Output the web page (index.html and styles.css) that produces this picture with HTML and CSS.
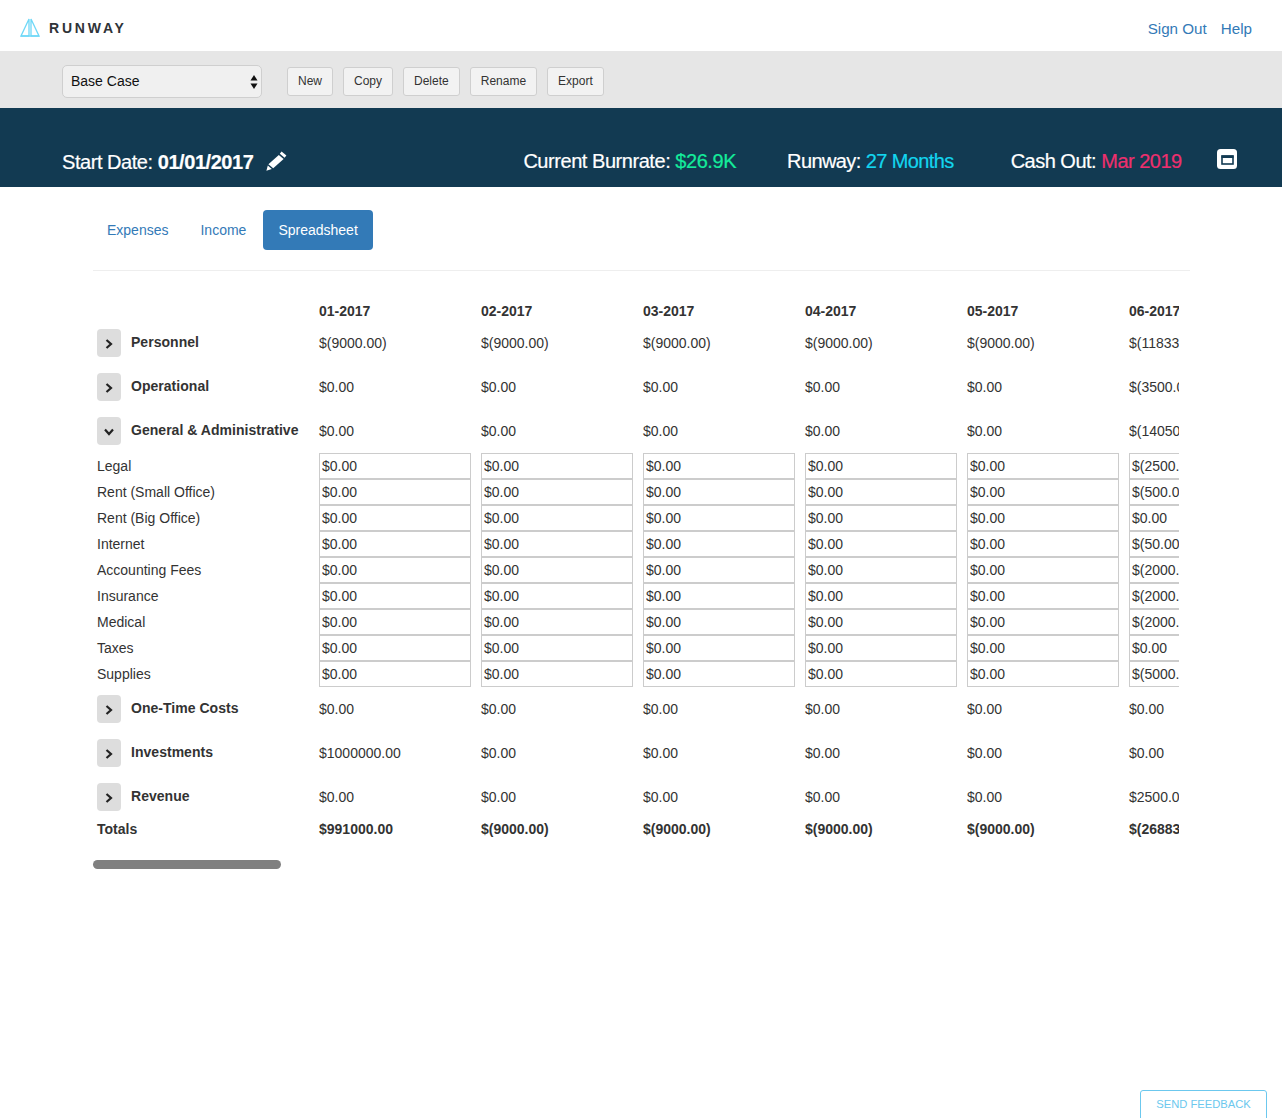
FILE: index.html
```html
<!DOCTYPE html>
<html lang="en">
<head>
<meta charset="utf-8">
<title>Runway</title>
<link rel="stylesheet" href="styles.css">
</head>
<body>
<header class="topbar">
  <div class="brand">
    <svg class="logo" width="20" height="19" viewBox="0 0 20 19" fill="none" stroke="#6fd8f7" stroke-width="1.3"><path d="M9 1 L1 18 H9 Z"/><path d="M11 1 L19 18 H11 Z"/><path d="M1 18 H19"/></svg>
    <span class="brand-name">RUNWAY</span>
  </div>
  <nav class="toplinks"><a href="#">Sign Out</a><a href="#">Help</a></nav>
</header>

<section class="toolbar">
  <div class="select-wrap">
    <select class="scenario"><option>Base Case</option></select>
    <svg class="select-arrows" width="8" height="14" viewBox="0 0 8 14" fill="#111"><path d="M4 0 L7.5 5.5 H0.5 Z"/><path d="M4 14 L7.5 8.5 H0.5 Z"/></svg>
  </div>
  <button class="tool">New</button>
  <button class="tool">Copy</button>
  <button class="tool">Delete</button>
  <button class="tool">Rename</button>
  <button class="tool">Export</button>
</section>

<section class="banner">
  <div class="start">Start Date: <b>01/01/2017</b></div>
  <svg class="pencil" width="21" height="20" viewBox="0 0 21 20" fill="#fff"><path d="M15.6 0.6 L20.4 4.6 L18.6 6.8 L13.8 2.8 Z"/><path d="M12.8 4 L17.6 8 L7.2 17.2 L2.4 13.2 Z"/><path d="M1.8 14.4 L5.8 18 L0.4 19.8 Z"/></svg>
  <div class="stat stat-burn">Current Burnrate: <span class="green">$26.9K</span></div>
  <div class="stat stat-runway">Runway: <span class="cyan">27 Months</span></div>
  <div class="stat stat-cash">Cash Out: <span class="pink">Mar 2019</span></div>
  <svg class="window" width="20" height="20" viewBox="0 0 20 20"><rect x="0" y="0" width="20" height="20" rx="3.5" fill="#fff"/><rect x="5" y="7" width="11" height="8" fill="none" stroke="#123a52" stroke-width="1.6"/><rect x="4.5" y="6.5" width="12" height="2.5" fill="#123a52"/></svg>
</section>

<main class="content">
  <nav class="tabs">
    <a class="tab" href="#">Expenses</a>
    <a class="tab" href="#">Income</a>
    <a class="tab active" href="#">Spreadsheet</a>
  </nav>
  <hr class="rule">

  <div class="sheet">
    <div class="row row-head"><div></div><div>01-2017</div><div>02-2017</div><div>03-2017</div><div>04-2017</div><div>05-2017</div><div>06-2017</div></div>

    <div class="row row-section">
      <div class="label"><button class="toggle"><svg width="8" height="10" viewBox="0 0 8 10" fill="none" stroke="#222" stroke-width="2.2"><path d="M1.5 1 L6 5 L1.5 9"/></svg></button><span class="section-name">Personnel</span></div>
      <div>$(9000.00)</div><div>$(9000.00)</div><div>$(9000.00)</div><div>$(9000.00)</div><div>$(9000.00)</div><div>$(11833.33)</div>
    </div>
    <div class="row row-section">
      <div class="label"><button class="toggle"><svg width="8" height="10" viewBox="0 0 8 10" fill="none" stroke="#222" stroke-width="2.2"><path d="M1.5 1 L6 5 L1.5 9"/></svg></button><span class="section-name">Operational</span></div>
      <div>$0.00</div><div>$0.00</div><div>$0.00</div><div>$0.00</div><div>$0.00</div><div>$(3500.00)</div>
    </div>
    <div class="row row-section row-open">
      <div class="label"><button class="toggle"><svg width="10" height="8" viewBox="0 0 10 8" fill="none" stroke="#222" stroke-width="2.2"><path d="M1 1.5 L5 6 L9 1.5"/></svg></button><span class="section-name">General &amp; Administrative</span></div>
      <div>$0.00</div><div>$0.00</div><div>$0.00</div><div>$0.00</div><div>$0.00</div><div>$(14050.00)</div>
    </div>

    <div class="lines">
      <div class="row row-line"><div>Legal</div><input value="$0.00"><input value="$0.00"><input value="$0.00"><input value="$0.00"><input value="$0.00"><input value="$(2500.00)"></div>
      <div class="row row-line"><div>Rent (Small Office)</div><input value="$0.00"><input value="$0.00"><input value="$0.00"><input value="$0.00"><input value="$0.00"><input value="$(500.00)"></div>
      <div class="row row-line"><div>Rent (Big Office)</div><input value="$0.00"><input value="$0.00"><input value="$0.00"><input value="$0.00"><input value="$0.00"><input value="$0.00"></div>
      <div class="row row-line"><div>Internet</div><input value="$0.00"><input value="$0.00"><input value="$0.00"><input value="$0.00"><input value="$0.00"><input value="$(50.00)"></div>
      <div class="row row-line"><div>Accounting Fees</div><input value="$0.00"><input value="$0.00"><input value="$0.00"><input value="$0.00"><input value="$0.00"><input value="$(2000.00)"></div>
      <div class="row row-line"><div>Insurance</div><input value="$0.00"><input value="$0.00"><input value="$0.00"><input value="$0.00"><input value="$0.00"><input value="$(2000.00)"></div>
      <div class="row row-line"><div>Medical</div><input value="$0.00"><input value="$0.00"><input value="$0.00"><input value="$0.00"><input value="$0.00"><input value="$(2000.00)"></div>
      <div class="row row-line"><div>Taxes</div><input value="$0.00"><input value="$0.00"><input value="$0.00"><input value="$0.00"><input value="$0.00"><input value="$0.00"></div>
      <div class="row row-line"><div>Supplies</div><input value="$0.00"><input value="$0.00"><input value="$0.00"><input value="$0.00"><input value="$0.00"><input value="$(5000.00)"></div>
    </div>

    <div class="row row-section">
      <div class="label"><button class="toggle"><svg width="8" height="10" viewBox="0 0 8 10" fill="none" stroke="#222" stroke-width="2.2"><path d="M1.5 1 L6 5 L1.5 9"/></svg></button><span class="section-name">One-Time Costs</span></div>
      <div>$0.00</div><div>$0.00</div><div>$0.00</div><div>$0.00</div><div>$0.00</div><div>$0.00</div>
    </div>
    <div class="row row-section">
      <div class="label"><button class="toggle"><svg width="8" height="10" viewBox="0 0 8 10" fill="none" stroke="#222" stroke-width="2.2"><path d="M1.5 1 L6 5 L1.5 9"/></svg></button><span class="section-name">Investments</span></div>
      <div>$1000000.00</div><div>$0.00</div><div>$0.00</div><div>$0.00</div><div>$0.00</div><div>$0.00</div>
    </div>
    <div class="row row-section row-last">
      <div class="label"><button class="toggle"><svg width="8" height="10" viewBox="0 0 8 10" fill="none" stroke="#222" stroke-width="2.2"><path d="M1.5 1 L6 5 L1.5 9"/></svg></button><span class="section-name">Revenue</span></div>
      <div>$0.00</div><div>$0.00</div><div>$0.00</div><div>$0.00</div><div>$0.00</div><div>$2500.00</div>
    </div>

    <div class="row row-totals"><div>Totals</div><div>$991000.00</div><div>$(9000.00)</div><div>$(9000.00)</div><div>$(9000.00)</div><div>$(9000.00)</div><div>$(26883.33)</div></div>
  </div>
  <div class="thumb"></div>
</main>

<a class="feedback" href="#">SEND FEEDBACK</a>
</body>
</html>
```

FILE: styles.css
```css
* { box-sizing: border-box; }
html, body { margin: 0; padding: 0; }
body {
  font-family: "Liberation Sans", Arial, sans-serif;
  font-size: 14px;
  color: #333;
  background: #fff;
}
a { text-decoration: none; color: #337ab7; }

.topbar {
  height: 51px;
  display: flex;
  align-items: center;
  justify-content: space-between;
  padding: 5px 30px 0 20px;
  background: #fff;
}
.brand { display: flex; align-items: center; }
.logo { display: block; margin: -2px 9px 0 0; }
.brand-name {
  font-weight: 700;
  font-size: 14px;
  letter-spacing: 2.8px;
  color: #2f3338;
}
.toplinks { display: flex; gap: 14px; font-size: 15.2px; }

.toolbar {
  height: 57px;
  padding: 14px 0 10px 62px;
  display: flex;
  align-items: center;
  gap: 10px;
  background: #e6e6e6;
}
.select-wrap { position: relative; width: 200px; height: 33px; margin-right: 15px; }
.scenario {
  appearance: none;
  -webkit-appearance: none;
  width: 100%;
  height: 100%;
  padding: 0 8px 2px;
  font: 14px "Liberation Sans", Arial, sans-serif;
  color: #111;
  background: #f0f0f0;
  border: 1px solid #cfcfcf;
  border-radius: 5px;
}
.select-arrows { position: absolute; right: 4px; top: 10px; }
.tool {
  height: 29px;
  padding: 0 10px 2px;
  font: 12px "Liberation Sans", Arial, sans-serif;
  color: #333;
  background: #f2f2f2;
  border: 1px solid #cfcfcf;
  border-radius: 3px;
}

.banner {
  height: 79px;
  padding: 39px 0 12px 62px;
  display: flex;
  align-items: center;
  background: #123a52;
  color: #fff;
  font-size: 20px;
  letter-spacing: -0.45px;
  -webkit-text-stroke: 0.2px;
}
.start { margin-top: 2px; }
.pencil { margin-left: 13px; }
.stat-burn { margin-left: 236px; }
.stat-runway { margin-left: 51px; letter-spacing: -0.6px; }
.stat-cash { margin-left: 57px; letter-spacing: -0.5px; }
.window { margin: -4px 0 0 35px; }
.green { color: #14ec9b; }
.cyan { color: #12d6ef; }
.pink { color: #ee2f6e; }

.content { padding: 23px 92px 0 93px; }
.tabs { display: flex; gap: 2px; margin-left: -1px; }
.tab {
  height: 40px;
  line-height: 40px;
  padding: 0 15px;
  border-radius: 4px;
}
.tab.active { background: #337ab7; color: #fff; }
.rule { height: 1px; margin: 20px 0 30px; border: 0; background: #eee; }

.sheet { width: 1086px; padding-left: 4px; overflow: hidden; }
.row {
  display: grid;
  grid-template-columns: 212px repeat(6, 152px);
  column-gap: 10px;
  align-items: center;
  white-space: nowrap;
}
.row-head { height: 20px; margin-bottom: 8px; font-weight: 700; }
.row-section { height: 28px; margin-bottom: 16px; }
.row-section.row-open, .row-section.row-last { margin-bottom: 8px; }
.label { display: flex; align-items: center; }
.toggle {
  width: 24px;
  height: 28px;
  flex: none;
  display: flex;
  align-items: center;
  justify-content: center;
  padding: 2px 0 0;
  background: #ddd;
  border: 0;
  border-radius: 4px;
}
.section-name {
  margin: -2px 0 0 10px;
  font-weight: 700;
  letter-spacing: 0.03px;
}
.lines { margin-bottom: 8px; }
.row-line { height: 26px; }
.row-line input {
  width: 152px;
  height: 26px;
  padding: 0 2px;
  font: 14px "Liberation Sans", Arial, sans-serif;
  color: #333;
  background: #fff;
  border: 1px solid #ccc;
  border-radius: 0;
}
.row-totals { height: 20px; font-weight: 700; }
.thumb {
  width: 188px;
  height: 9px;
  margin-top: 21px;
  background: #808080;
  border-radius: 5px;
}

.feedback {
  position: fixed;
  left: 1140px;
  top: 1090px;
  width: 127px;
  height: 34px;
  padding-top: 7px;
  text-align: center;
  font-size: 11.2px;
  color: #6cc8ee;
  background: #fff;
  border: 1px solid #6cc8ee;
  border-radius: 3px;
}
```
